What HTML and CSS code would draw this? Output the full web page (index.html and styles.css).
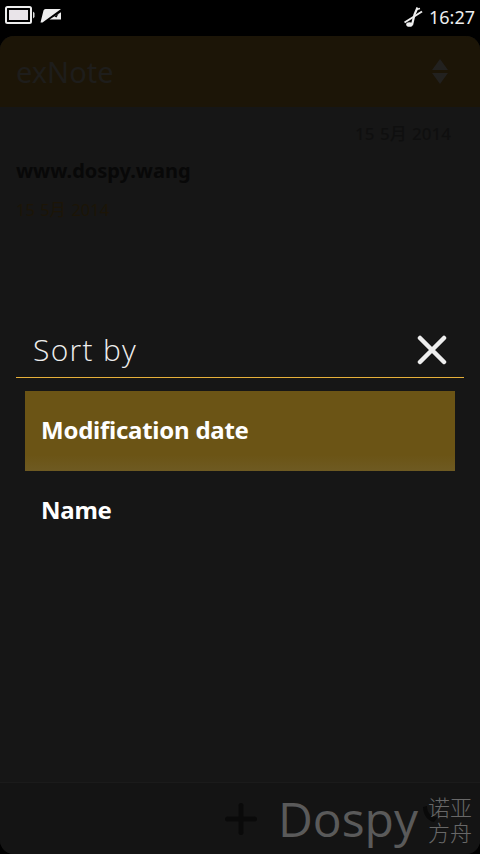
FILE: index.html
```html
<!DOCTYPE html>
<html lang="en">
<head>
<meta charset="utf-8">
<title>exNote</title>
<link rel="stylesheet" href="styles.css">
</head>
<body>
<div class="screen">
  <header class="status">
    <div class="status-left">
      <svg class="ic-battery" width="30" height="18" viewBox="0 0 30 18"><rect x="1" y="1" width="25" height="16" rx="1.500" fill="none" stroke="#eee" stroke-width="2"/><rect x="4" y="4" width="19" height="10" fill="#e9e4e9"/><path d="M28 5.500 L29.500 7 V11 L28 12.500Z" fill="#ddd"/></svg>
      <svg class="ic-msg" width="24" height="15" viewBox="0 0 24 15"><path d="M0.500 14.500 L3.500 2.500 Q3.800 1 5.500 1 H21 L2.500 14.500Z" fill="#eee"/><path d="M9.500 11.500 H21 V4.200Z" fill="#eee"/><path d="M14.500 8.500 L18.500 5.800 L16.500 9.500Z" fill="#000"/></svg>
    </div>
    <div class="status-right">
      <svg class="ic-silent" width="19" height="20" viewBox="0 0 19 20"><path d="M0.500 15.500 L18 4.500" fill="none" stroke="#eee" stroke-width="2"/><path d="M8 18 L10.500 7.500 L13.500 0.500" fill="none" stroke="#eee" stroke-width="2.200"/><path d="M12.500 2.500 L16 1.500" fill="none" stroke="#eee" stroke-width="1.500"/><ellipse cx="5.500" cy="17.500" rx="3.300" ry="2.300" fill="#eee"/></svg>
      <span class="clock">16:27</span>
    </div>
  </header>
  <div class="app">
    <div class="titlebar">
      <span class="app-title">exNote</span>
      <svg class="ic-sort" width="16" height="26" viewBox="0 0 16 26"><path d="M8 0 L16 11 H0Z M0 14 H16 L8 25Z" fill="#22211f"/></svg>
    </div>
    <main class="notes">
      <div class="date-head">15 5月 2014</div>
      <div class="note-title">www.dospy.wang</div>
      <div class="note-date">15 5月 2014</div>
    </main>
    <footer class="toolbar">
      <svg class="ic-plus" width="32" height="32" viewBox="0 0 32 32"><path d="M16 2.500 V29.500 M2.500 16 H29.500" stroke="#0a0a0a" stroke-width="5" stroke-linecap="round"/></svg>
      <div class="watermark">
        <span class="wm-latin">Dospy</span>
        <svg class="ic-hidden" width="17" height="17" viewBox="0 0 17 17"><path d="M1 1 L5 0 C5 7 9 11 16 11 L12 16 C6 15 1 9 1 1Z" fill="#090909"/></svg>
        <span class="wm-cjk">诺亚<br>方舟</span>
      </div>
    </footer>
  </div>
  <section class="dialog">
    <div class="dialog-head">
      <span class="dialog-title">Sort by</span>
      <svg class="ic-close" width="30" height="30" viewBox="0 0 30 30"><path d="M3 3 L27 27 M27 3 L3 27" stroke="#eee" stroke-width="4.500" stroke-linecap="round"/></svg>
    </div>
    <ul class="options">
      <li class="option selected">Modification date</li>
      <li class="option">Name</li>
    </ul>
  </section>
</div>
</body>
</html>
```

FILE: styles.css
```css
* { box-sizing: border-box; margin: 0; padding: 0; }
html, body { width: 480px; height: 854px; overflow: hidden; background: #000; }
body { font-family: "Noto Sans", "Noto Sans CJK SC", sans-serif; }
.screen { position: relative; width: 480px; height: 854px; display: flex; flex-direction: column; }
.status { height: 36px; flex: none; display: flex; justify-content: space-between; align-items: center; background: #000; padding: 0 5px 6px 5px; }
.status-left { display: flex; align-items: center; gap: 5px; }
.status-right { display: flex; align-items: center; gap: 6px; padding-top: 4px; }
.clock { color: #eee; font-size: 18px; line-height: 24px; }
.app { flex: 1; display: flex; flex-direction: column; background: #161616; border-radius: 14px; overflow: hidden; }
.titlebar { height: 71px; flex: none; display: flex; justify-content: space-between; align-items: center; padding: 0 32px 0 16px; background: #1c1507; }
.app-title { font-size: 29px; color: #1e1d1b; }
.notes { flex: 1; padding: 15px 29px 0 16px; }
.date-head { text-align: right; font-size: 17px; word-spacing: 1px; font-weight: 500; color: #0f0f0f; line-height: 24px; }
.note-title { margin-top: 10px; font-size: 20px; font-weight: 700; color: #080808; line-height: 30px; }
.note-date { margin-top: 12px; font-size: 16.500px; word-spacing: 1px; color: #1c1507; line-height: 24px; }
.toolbar { height: 72px; flex: none; display: flex; justify-content: flex-end; align-items: center; gap: 21px; padding: 0 8px 0 0; background: #141414; border-top: 1px solid #1b1b1b; }
.watermark { position: relative; display: flex; align-items: center; gap: 10px; }
.ic-hidden { position: absolute; right: 33px; top: 12px; }
.wm-latin { font-family: "Open Sans", sans-serif; font-size: 48px; font-weight: 400; color: #5a5a5a; line-height: 50px; }
.wm-cjk { position: relative; font-family: "Noto Sans CJK SC", sans-serif; font-size: 22px; line-height: 25px; font-weight: 300; color: #686868; }
.dialog { position: absolute; left: 0; top: 322px; width: 480px; padding: 0 16px; }
.dialog-head { height: 56px; display: flex; justify-content: space-between; align-items: center; padding: 0 17px; border-bottom: 1px solid #e6b03a; }
.dialog-title { font-family: "Open Sans", sans-serif; font-size: 30px; font-weight: 300; color: #eee; letter-spacing: 1.300px; }
.options { list-style: none; margin-top: 13px; padding: 0 9px; }
.option { height: 80px; display: flex; align-items: center; padding: 0 0 4px 16px; font-size: 24px; font-weight: 700; letter-spacing: -0.250px; color: #fff; }
.option.selected { background: linear-gradient(#6b5415 80%, #6e5a22); }
```
